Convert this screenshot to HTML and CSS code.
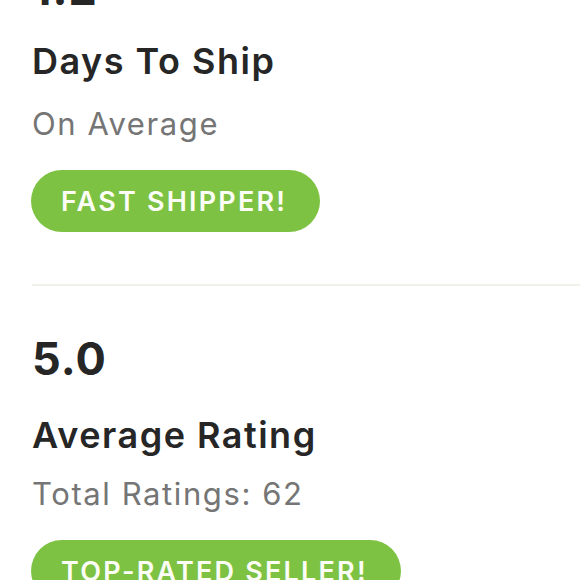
FILE: index.html
```html
<!DOCTYPE html>
<html lang="en">
<head>
<meta charset="utf-8">
<title>Seller Stats</title>
<link rel="stylesheet" href="styles.css">
</head>
<body>
<main class="stats">
  <section class="stat stat-first">
    <div class="stat-value">1.2</div>
    <div class="stat-title">Days To Ship</div>
    <div class="stat-sub">On Average</div>
    <span class="badge badge-ship">FAST SHIPPER!</span>
  </section>
  <hr class="divider">
  <section class="stat">
    <div class="stat-value">5.0</div>
    <div class="stat-title">Average Rating</div>
    <div class="stat-sub">Total Ratings: 62</div>
    <span class="badge badge-rated">TOP-RATED SELLER!</span>
  </section>
</main>
</body>
</html>
```

FILE: styles.css
```css
html, body {
  margin: 0;
  padding: 0;
  background: #ffffff;
}
body {
  font-family: "Inter", "Lato", "Liberation Sans", sans-serif;
  color: #262626;
  overflow: hidden;
}
.stats {
  padding-left: 32px;
}
.stat {
  display: flex;
  flex-direction: column;
  align-items: flex-start;
}
.stat-first {
  margin-top: -34px;
}
.stat-value {
  font-size: 45px;
  line-height: 45px;
  font-weight: 700;
  letter-spacing: 1px;
  color: #262626;
}
.stat-title {
  margin-top: 36px;
  font-size: 36px;
  line-height: 36px;
  font-weight: 600;
  letter-spacing: 1.5px;
  color: #262626;
}
.stat-sub {
  margin-top: 26px;
  font-size: 31px;
  line-height: 30px;
  font-weight: 400;
  letter-spacing: 1.6px;
  color: #757575;
}
.stat-first .stat-title {
  margin-top: 32px;
}
.stat-first .stat-sub {
  margin-top: 30px;
}
.badge {
  margin-top: 31px;
  margin-left: -1px;
  height: 62px;
  display: flex;
  align-items: center;
  padding: 0 33px 0 30px;
  border-radius: 31px;
  background: #7dc242;
  color: #fbfdf6;
  font-size: 27px;
  font-weight: 600;
  letter-spacing: 2.2px;
  box-sizing: border-box;
}
.divider {
  margin: 52px 0 0 0;
  border: 0;
  height: 2px;
  background: #f1f1ea;
}
.divider + .stat {
  margin-top: 50px;
}
```
